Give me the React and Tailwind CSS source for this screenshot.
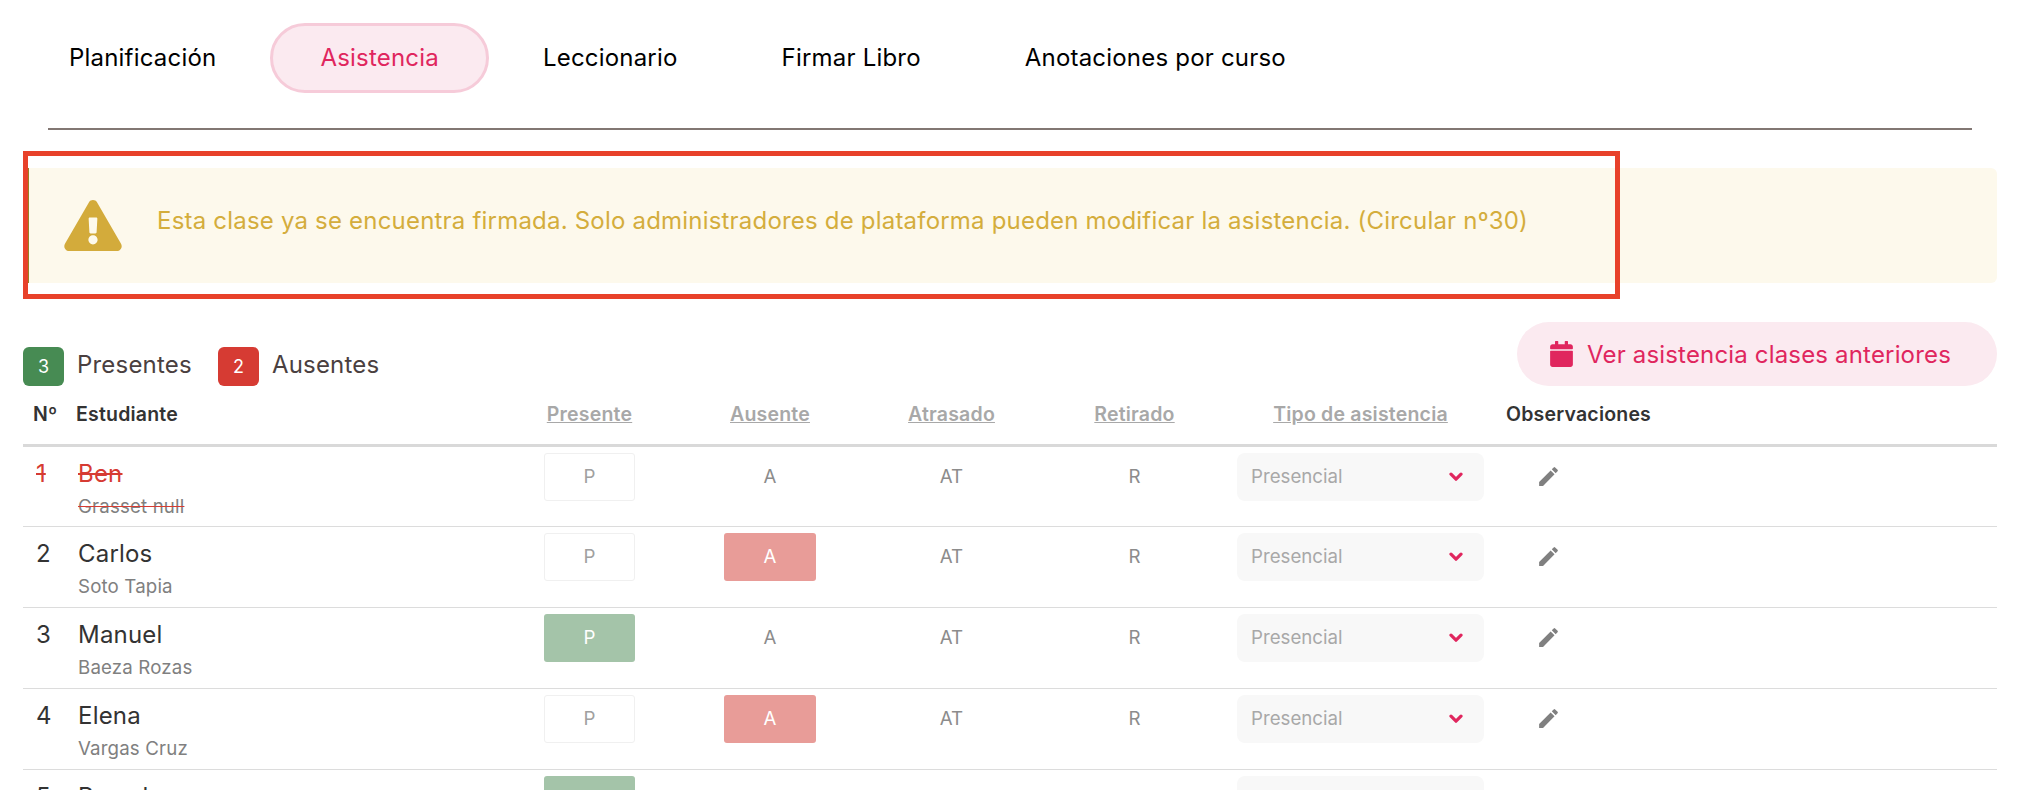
import React from "react";
import { FaExclamationTriangle, FaCalendar } from "react-icons/fa";
import { MdEdit } from "react-icons/md";

const tabs = ["Planificación", "Asistencia", "Leccionario", "Firmar Libro", "Anotaciones por curso"];

const students = [
  { n: 1, name: "Ben", last: "Grasset null", present: false, absent: false, retired: true },
  { n: 2, name: "Carlos", last: "Soto Tapia", present: false, absent: true },
  { n: 3, name: "Manuel", last: "Baeza Rozas", present: true, absent: false },
  { n: 4, name: "Elena", last: "Vargas Cruz", present: false, absent: true },
  { n: 5, name: "Pamela", last: "", present: true, absent: false },
];

function Row({ s }) {
  return (
    <tr className="h-[81px] border-b border-[#dcdcdc] align-top">
      <td className={`pl-[13px] pt-3 text-2xl leading-[30px] ${s.retired ? "text-[#d63b33] line-through" : "text-[#333]"}`}>
        {s.n}
      </td>
      <td className="pl-0.5 pt-3">
        <div className={`text-2xl leading-[30px] tracking-[0.2px] ${s.retired ? "text-[#d63b33] line-through" : "text-[#333]"}`}>{s.name}</div>
        <div className={`text-[18.7px] leading-9 tracking-[0.15px] text-[#808080] ${s.retired ? "line-through decoration-[#d63b33]" : ""}`}>{s.last}</div>
      </td>
      <td className="pt-1.5">
        {s.present ? (
          <div className="mx-auto flex h-12 w-[91px] items-center justify-center rounded-[3px] bg-[#a4c4a9] pt-0.5 text-[18.7px] text-white">P</div>
        ) : (
          <div className="mx-auto flex h-12 w-[91px] items-center justify-center rounded-[3px] border border-[#f0f0f0] pt-0.5 text-[18.7px] text-[#a0a0a0]">P</div>
        )}
      </td>
      <td className="pt-1.5">
        <div className={`mx-auto flex h-12 w-[92px] items-center justify-center rounded-[3px] pt-0.5 text-[18.7px] ${s.absent ? "bg-[#e89c98] text-white" : "text-[#8c8c8c]"}`}>A</div>
      </td>
      <td className="pt-1.5">
        <div className="flex h-12 items-center justify-center pt-0.5 text-[18.7px] text-[#8c8c8c]">AT</div>
      </td>
      <td className="pt-1.5">
        <div className="flex h-12 items-center justify-center pt-0.5 text-[18.7px] text-[#8c8c8c]">R</div>
      </td>
      <td className="pt-1.5">
        <div className="mx-auto flex h-12 w-[247px] items-center justify-between rounded-lg bg-[#f8f8f8] pl-3.5 pr-[21px] text-[18.7px] text-[#a8a8a8]">
          <span className="pt-0.5">Presencial</span>
          <svg viewBox="0 0 14 10" className="h-2.5 w-3.5" fill="none" stroke="#e0265e" strokeWidth="3.2" strokeLinecap="round" strokeLinejoin="round">
            <path d="M2 2.2l5 5 5-5" />
          </svg>
        </div>
      </td>
      <td className="pt-1.5">
        <div className="flex h-12 items-center pl-[41px]">
          <MdEdit className="h-[25px] w-[25px] text-[#808080]" />
        </div>
      </td>
    </tr>
  );
}

export default function App() {
  return (
    <div className="relative h-[790px] overflow-hidden bg-white font-['Inter',sans-serif]">
      {/* Tabs */}
      <nav className="ml-[19px] flex gap-1 pt-[23px]">
        {tabs.map((t) => (
          <div
            key={t}
            className={`flex h-[70px] items-center rounded-[35px] border-[3px] px-[47px] text-2xl tracking-[0.2px] ${
              t === "Asistencia" ? "border-[#f6cbd9] bg-[#fbeaf0] text-[#e0265e]" : "border-transparent text-black"
            }`}
          >
            {t}
          </div>
        ))}
      </nav>
      <div className="ml-12 mr-[50px] mt-[35px] h-0.5 bg-[#827773]" />

      {/* Alert */}
      <div className="ml-[23px] mr-[25px] mt-[38px] flex h-[115px] items-center gap-[35px] rounded-md bg-[#fdf9ec] pl-[41px] text-2xl tracking-[0.2px] text-[#d4ad3c]">
        <FaExclamationTriangle className="h-[51px] w-[58px] text-[#d3ab3b]" />
        <span className="pb-2.5">Esta clase ya se encuentra firmada. Solo administradores de plataforma pueden modificar la asistencia. (Circular nº30)</span>
      </div>

      {/* Resumen */}
      <div className="ml-[23px] mr-[25px] mt-[39px] flex items-end">
        <div className="flex h-[39px] w-[41px] items-center justify-center rounded-md bg-[#478b53] text-lg text-white">3</div>
        <span className="ml-[13px] pb-[5px] text-2xl tracking-[0.2px] text-[#4a4040]">Presentes</span>
        <div className="ml-[26px] flex h-[39px] w-[41px] items-center justify-center rounded-md bg-[#d63b33] text-lg text-white">2</div>
        <span className="ml-[13px] pb-[5px] text-2xl tracking-[0.2px] text-[#4a4040]">Ausentes</span>
        <button className="ml-auto flex h-16 items-center gap-3.5 rounded-full bg-[#fbeaf0] pl-[33px] pr-[46px] text-2xl tracking-[0.17px] text-[#e0265e]">
          <FaCalendar className="h-[26px] w-[23px]" />
          <span className="pt-0.5">Ver asistencia clases anteriores</span>
        </button>
      </div>

      {/* Tabla */}
      <table className="ml-[23px] w-[1974px] table-fixed border-collapse">
        <colgroup>
          <col className="w-[53px]" />
          <col className="w-[423px]" />
          <col className="w-[181px]" />
          <col className="w-[180px]" />
          <col className="w-[183px]" />
          <col className="w-[183px]" />
          <col className="w-[269px]" />
          <col />
        </colgroup>
        <thead>
          <tr className="h-[59px] border-b-[3px] border-[#d9d9d9] text-[19.5px] tracking-[0.2px]">
            <th className="pl-2.5 text-left font-semibold text-[#333]">Nº</th>
            <th className="text-left font-semibold text-[#333]">Estudiante</th>
            <th className="font-semibold text-[#a8a8a8] underline">Presente</th>
            <th className="font-semibold text-[#a8a8a8] underline">Ausente</th>
            <th className="font-semibold text-[#a8a8a8] underline">Atrasado</th>
            <th className="font-semibold text-[#a8a8a8] underline">Retirado</th>
            <th className="font-semibold text-[#a8a8a8] underline">Tipo de asistencia</th>
            <th className="pl-[11px] text-left font-semibold text-[#333]">Observaciones</th>
          </tr>
        </thead>
        <tbody>
          {students.map((s) => (
            <Row key={s.n} s={s} />
          ))}
        </tbody>
      </table>

      {/* Recuadro de anotación sobre la captura */}
      <div className="pointer-events-none absolute left-[23px] top-[151px] h-[148px] w-[1597px] border-[5px] border-[#e8412a]">
        <div className="absolute left-0 top-3 h-[115px] w-px bg-[#9a7f22]" />
        <div className="absolute inset-x-0 top-0 h-3 bg-white" />
        <div className="absolute inset-x-0 bottom-0 h-[11px] bg-white" />
      </div>
    </div>
  );
}
